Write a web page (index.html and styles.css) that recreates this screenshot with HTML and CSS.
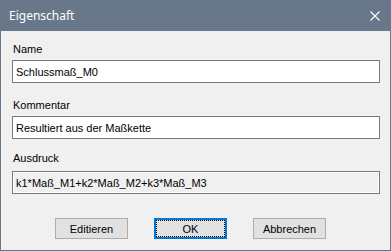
FILE: index.html
```html
<!DOCTYPE html>
<html lang="de">

<head>
  <meta charset="UTF-8">
  <meta name="viewport" content="width=device-width, initial-scale=1.0">
  <title>Eigenschaft</title>
  <link rel="stylesheet" href="styles.css">
</head>

<body>
  <div class="dialog">
    <div class="dialog-title">
      <span>Eigenschaft</span>
      <a class="close-btn" href="javascript:;">
        <svg width="10" height="10" viewBox="0 0 10 10">
          <path d="M0.5 0.5 L9.5 9.5 M9.5 0.5 L0.5 9.5" stroke="#fff" stroke-width="1.1" fill="none"/>
        </svg>
      </a>
    </div>

    <div class="dialog-body">
      <div class="field">
        <label for="name">Name</label>
        <input type="text" id="name" class="text-input" value="Schlussmaß_M0">
      </div>
      <div class="field">
        <label for="comment">Kommentar</label>
        <input type="text" id="comment" class="text-input" value="Resultiert aus der Maßkette">
      </div>
      <div class="field field-expr">
        <label for="expr">Ausdruck</label>
        <input type="text" id="expr" class="text-input readonly" value="k1*Maß_M1+k2*Maß_M2+k3*Maß_M3" readonly>
      </div>

      <div class="buttons">
        <button class="btn">Editieren</button>
        <button class="btn btn-default">OK</button>
        <button class="btn">Abbrechen</button>
      </div>
    </div>
  </div>
</body>

</html>
```

FILE: styles.css
```css
* {
  box-sizing: border-box;
}

html,
body {
  margin: 0;
  padding: 0;
}

body {
  font-family: "Liberation Sans", Arial, sans-serif;
  font-size: 11px;
  color: #000;
  background: #f0f0f0;
}

.dialog {
  width: 391px;
  height: 251px;
  background: #f0f0f0;
  border: 1px solid #687789;
  border-top: none;
}

.dialog-title {
  display: flex;
  align-items: center;
  justify-content: space-between;
  height: 31px;
  margin: 0 -1px;
  padding: 0 11px 0 9px;
  background: #687789;
  color: #fff;
  font-family: "Noto Sans", "Open Sans", sans-serif;
  font-size: 12px;
}

.close-btn {
  display: flex;
  width: 10px;
  height: 10px;
}

.dialog-body {
  padding: 12px 10px 0 11px;
}

.field {
  display: flex;
  flex-direction: column;
}

.field + .field {
  margin-top: 16px;
}

.field.field-expr {
  margin-top: 13px;
}

.field label {
  display: block;
  height: 13px;
  line-height: 13px;
  margin: 0 0 4px 1px;
}

.field-expr label {
  margin-bottom: 6px;
}

.text-input {
  width: 368px;
  height: 23px;
  margin: 0;
  padding: 0 3px;
  border: 1px solid #7a7a7a;
  background: #fff;
  font-family: "Liberation Sans", Arial, sans-serif;
  font-size: 11px;
  color: #000;
  outline: none;
}

.text-input.readonly {
  background: #f0f0f0;
  box-shadow: inset 0 0 0 1px #fcfcfc;
}

.buttons {
  display: flex;
  gap: 26px;
  margin-top: 24px;
  padding-left: 43px;
}

.btn {
  width: 73px;
  height: 21px;
  margin: 0;
  padding: 0;
  background: #e1e1e1;
  border: 1px solid #adadad;
  font-family: "Liberation Sans", Arial, sans-serif;
  font-size: 11px;
  color: #000;
}

.btn-default {
  border: 2px solid #0078d7;
  outline: 1px dotted #000;
  outline-offset: -3px;
}
```
